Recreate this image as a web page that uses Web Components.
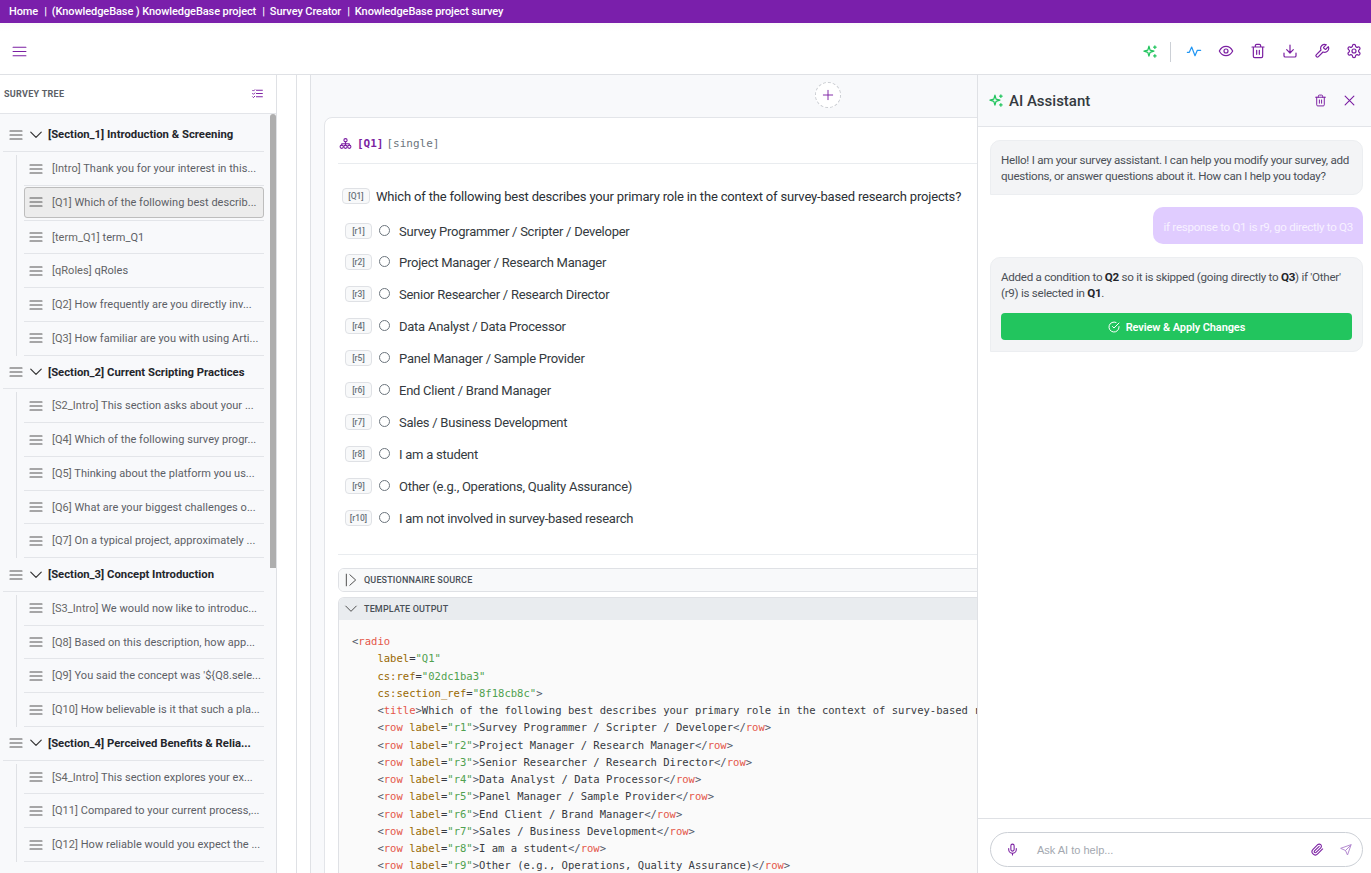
<!DOCTYPE html>
<html lang="en">
<head>
<meta charset="utf-8">
<title>Survey Creator</title>
<style>
  html, body { margin: 0; height: 100%; overflow: hidden; background: #fff; font-family: Roboto, "Liberation Sans", sans-serif; }
</style>
</head>
<body>
<survey-app></survey-app>

<script>
const ICONS = {
  sparkle: '<path d="M9.5 3.5 11.3 9.7 17.5 11.5 11.3 13.3 9.5 19.5 7.7 13.3 1.5 11.5 7.7 9.7Z"/><path d="M19 3v4M17 5h4M19 17v4M17 19h4"/>',
  activity: '<path d="M2 14h3l3.500-8 5 13 3.500-8h5"/>',
  eye: '<path d="M2 12s3.500-7 10-7 10 7 10 7-3.500 7-10 7-10-7-10-7z"/><circle cx="12" cy="12" r="3"/>',
  trash: '<path d="M3 6h18M5 6v14a2 2 0 0 0 2 2h10a2 2 0 0 0 2-2V6M8 6V4a2 2 0 0 1 2-2h4a2 2 0 0 1 2 2v2M10 11v6M14 11v6"/>',
  download: '<path d="M12 3v12M7 10l5 5 5-5M3 15v4a2 2 0 0 0 2 2h14a2 2 0 0 0 2-2v-4"/>',
  wrench: '<path d="M14.700 6.300a1 1 0 0 0 0 1.400l1.600 1.600a1 1 0 0 0 1.400 0l3.770-3.770a6 6 0 0 1-7.940 7.940l-6.910 6.910a2.120 2.120 0 0 1-3-3l6.910-6.910a6 6 0 0 1 7.940-7.940l-3.760 3.760z"/>',
  gear: '<path d="M12.220 2h-.44a2 2 0 0 0-2 2v.18a2 2 0 0 1-1 1.730l-.43.25a2 2 0 0 1-2 0l-.15-.08a2 2 0 0 0-2.730.73l-.22.38a2 2 0 0 0 .73 2.730l.15.1a2 2 0 0 1 1 1.720v.51a2 2 0 0 1-1 1.740l-.15.09a2 2 0 0 0-.73 2.730l.22.38a2 2 0 0 0 2.730.73l.15-.08a2 2 0 0 1 2 0l.43.25a2 2 0 0 1 1 1.730V20a2 2 0 0 0 2 2h.44a2 2 0 0 0 2-2v-.18a2 2 0 0 1 1-1.730l.43-.25a2 2 0 0 1 2 0l.15.08a2 2 0 0 0 2.730-.73l.22-.39a2 2 0 0 0-.73-2.730l-.15-.08a2 2 0 0 1-1-1.740v-.5a2 2 0 0 1 1-1.740l.15-.09a2 2 0 0 0 .73-2.730l-.22-.38a2 2 0 0 0-2.730-.73l-.15.08a2 2 0 0 1-2 0l-.43-.25a2 2 0 0 1-1-1.730V4a2 2 0 0 0-2-2z"/><circle cx="12" cy="12" r="3"/>',
  menu: '<path d="M3 6h18M3 12h18M3 18h18"/>',
  chevron: '<path d="M3 7l9 9 9-9"/>',
  expand: '<path d="M4 2v20M10 3l10 9-10 9"/>',
  close: '<path d="M5 5l14 14M19 5 5 19"/>',
  plus: '<path d="M12 4v16M4 12h16"/>',
  listcheck: '<path d="M10 6h11M10 12h11M10 18h11M3 6l1.500 1.500L7 5M3 12l1.500 1.500L7 11M3 18l1.500 1.500L7 17"/>',
  tree: '<circle cx="12" cy="6" r="3"/><circle cx="5" cy="18" r="3"/><circle cx="12" cy="18" r="3"/><circle cx="19" cy="18" r="3"/><path d="M12 9v6M5 15v-2.500h14V15"/>',
  check: '<path d="M22 11.080V12a10 10 0 1 1-5.930-9.140"/><path d="M22 4 12 14.010l-3-3"/>',
  clip: '<path d="m21.440 11.050-9.190 9.190a6 6 0 0 1-8.490-8.490l8.570-8.570A4 4 0 1 1 18 8.840l-8.590 8.570a2 2 0 0 1-2.830-2.830l8.490-8.480"/>',
  send: '<path d="M22 2 11 13M22 2l-7 20-4-9-9-4z"/>',
  mic: '<path d="M12 2a3 3 0 0 0-3 3v7a3 3 0 0 0 6 0V5a3 3 0 0 0-3-3z"/><path d="M19 10v2a7 7 0 0 1-14 0v-2M12 19v3"/>'
};

class UiIcon extends HTMLElement {
  connectedCallback() {
    const size = this.getAttribute('size') || 14;
    const stroke = this.getAttribute('stroke') || 2;
    const color = this.getAttribute('color') || 'currentColor';
    this.attachShadow({ mode: 'open' }).innerHTML = `
      <style>:host{display:inline-flex;flex:none;line-height:0}</style>
      <svg width="${size}" height="${size}" viewBox="0 0 24 24" fill="none" stroke="${color}"
        stroke-width="${stroke}" stroke-linecap="round" stroke-linejoin="round">${ICONS[this.getAttribute('name')]}</svg>`;
  }
}
customElements.define('ui-icon', UiIcon);

class CrumbBar extends HTMLElement {
  connectedCallback() {
    const crumbs = ['Home', '(KnowledgeBase ) KnowledgeBase project', 'Survey Creator', 'KnowledgeBase project survey'];
    this.attachShadow({ mode: 'open' }).innerHTML = `
      <style>
        :host{display:flex;align-items:center;height:23px;background:#7a1fab;color:#fff;padding-left:9px;
          font:500 11px/23px Roboto,sans-serif;letter-spacing:-.09px;white-space:nowrap}
        i{font-style:normal;margin:0 5px 0 6px}
      </style>
      ${crumbs.map(c => `<span>${c}</span>`).join('<i>|</i>')}`;
  }
}
customElements.define('crumb-bar', CrumbBar);

class TopToolbar extends HTMLElement {
  connectedCallback() {
    const right = [['activity', '#2196f3'], ['eye', '#7b1fa2'], ['trash', '#7b1fa2'], ['download', '#7b1fa2'], ['wrench', '#7b1fa2'], ['gear', '#7b1fa2']];
    this.attachShadow({ mode: 'open' }).innerHTML = `
      <style>
        :host{display:flex;align-items:center;height:52px;box-sizing:border-box;padding:5px 9px 0 11px;
          border-bottom:1px solid #dfe1e5;background:linear-gradient(#fafafa 0,#fff 8px)}
        .grow{flex:1}
        .sep{width:1px;height:20px;background:#ccd0d6;margin:1px 7px 0 12px}
        .ico{width:32px;display:flex;justify-content:center}
        .ico:last-child{width:16px;margin-left:8px}
      </style>
      <ui-icon name="menu" size="17" stroke="1.700" color="#7b1fa2"></ui-icon>
      <div class="grow"></div>
      <ui-icon name="sparkle" size="15" color="#22c55e"></ui-icon>
      <div class="sep"></div>
      ${right.map(r => `<div class="ico"><ui-icon name="${r[0]}" size="16" stroke="1.800" color="${r[1]}"></ui-icon></div>`).join('')}`;
  }
}
customElements.define('top-toolbar', TopToolbar);

class TreeRow extends HTMLElement {
  connectedCallback() {
    const section = this.hasAttribute('section');
    const active = this.hasAttribute('active');
    const tag = this.getAttribute('tag');
    const text = this.getAttribute('text');
    this.attachShadow({ mode: 'open' }).innerHTML = `
      <style>
        :host{display:block;height:33.75px;box-sizing:border-box;border-bottom:1px solid #e3e5e9;margin-left:${section ? 3 : 24}px;margin-right:12px}
        .row{display:flex;align-items:center;height:100%;box-sizing:border-box;white-space:nowrap}
        .section{padding-left:5px;font:700 11.3px Roboto,sans-serif;color:#24262b}
        .item{padding-left:4px;font:400 11px Roboto,sans-serif;letter-spacing:.04px;color:#5c6066}
        .bars{margin-right:8px;display:flex}
        .section .bars{margin-right:4.500px}
        .chev{margin-right:5.500px;display:flex}
        .active{background:#ececec;border:1px solid #bdbdbd;border-radius:3px;height:31px;margin-top:1px;padding-left:3px}
        .item .tag{color:#666}
      </style>
      <div class="row ${section ? 'section' : 'item'} ${active ? 'active' : ''}">
        <span class="bars"><ui-icon name="menu" size="16" stroke="1.700" color="#555"></ui-icon></span>
        ${section ? '<span class="chev"><ui-icon name="chevron" size="14" stroke="2" color="#333"></ui-icon></span>' : ''}
        <span><span class="tag">${tag}</span> ${text}</span>
      </div>`;
  }
}
customElements.define('tree-row', TreeRow);

class TreeSection extends HTMLElement {
  connectedCallback() {
    this.attachShadow({ mode: 'open' }).innerHTML = `
      <style>
        :host{display:block}
        .kids{position:relative}
        .line{position:absolute;left:16px;top:3px;bottom:0;width:1px;background:#dfe1e5}
      </style>
      <slot name="head"></slot>
      <div class="kids"><div class="line"></div><slot></slot></div>`;
  }
}
customElements.define('tree-section', TreeSection);

class SurveyTree extends HTMLElement {
  connectedCallback() {
    const data = [
      ['[Section_1]', 'Introduction & Screening', [
        ['[Intro]', 'Thank you for your interest in this...'],
        ['[Q1]', 'Which of the following best describ...', 1],
        ['[term_Q1]', 'term_Q1'],
        ['[qRoles]', 'qRoles'],
        ['[Q2]', 'How frequently are you directly inv...'],
        ['[Q3]', 'How familiar are you with using Arti...']]],
      ['[Section_2]', 'Current Scripting Practices', [
        ['[S2_Intro]', 'This section asks about your ...'],
        ['[Q4]', 'Which of the following survey progr...'],
        ['[Q5]', 'Thinking about the platform you us...'],
        ['[Q6]', 'What are your biggest challenges o...'],
        ['[Q7]', 'On a typical project, approximately ...']]],
      ['[Section_3]', 'Concept Introduction', [
        ['[S3_Intro]', 'We would now like to introduc...'],
        ['[Q8]', 'Based on this description, how app...'],
        ['[Q9]', 'You said the concept was \'${Q8.sele...'],
        ['[Q10]', 'How believable is it that such a pla...']]],
      ['[Section_4]', 'Perceived Benefits & Relia...', [
        ['[S4_Intro]', 'This section explores your ex...'],
        ['[Q11]', 'Compared to your current process,...'],
        ['[Q12]', 'How reliable would you expect the ...']]]
    ];
    const esc = s => s.replace(/&/g, '&amp;').replace(/"/g, '&quot;');
    this.attachShadow({ mode: 'open' }).innerHTML = `
      <style>
        :host{display:flex;flex-direction:column;flex:none;width:277px;box-sizing:border-box;border-right:1px solid #dfe1e5;height:100%;overflow:hidden;background:#fff}
        .head{display:flex;align-items:center;justify-content:space-between;height:39px;flex:none;box-sizing:border-box;
          padding:0 12px 0 4px;border-bottom:1px solid #e3e5e9;
          font:700 9px Roboto,sans-serif;color:#5c6066;letter-spacing:.28px}
        .head ui-icon{margin-top:-2px}
        .body{position:relative;flex:1;overflow:hidden;background:#f8f9fb;padding-top:4.400px}
        .thumb{position:absolute;right:0;top:0;width:6px;height:454px;background:#aeaeae;border-radius:3px 3px 0 0}
      </style>
      <div class="head"><span>SURVEY TREE</span><ui-icon name="listcheck" size="13" color="#7b1fa2" stroke="1.800"></ui-icon></div>
      <div class="body">
        ${data.map(s => `<tree-section>
          <tree-row slot="head" section tag="${s[0]}" text="${esc(s[1])}"></tree-row>
          ${s[2].map(i => `<tree-row tag="${i[0]}" text="${esc(i[1])}" ${i[2] ? 'active' : ''}></tree-row>`).join('')}
        </tree-section>`).join('')}
        <div class="thumb"></div>
      </div>`;
  }
}
customElements.define('survey-tree', SurveyTree);

class ChoiceRow extends HTMLElement {
  connectedCallback() {
    this.attachShadow({ mode: 'open' }).innerHTML = `
      <style>
        :host{display:flex;align-items:center;height:32px;box-sizing:border-box;padding-left:7px;font:400 13px Roboto,sans-serif;letter-spacing:-.25px;color:#343a40}
        :host([first]){padding-top:2px}
        .tag{display:inline-flex;align-items:center;justify-content:center;box-sizing:border-box;width:27px;height:16px;
          border:1px solid #dfe1e5;border-radius:4px;background:#f8f9fa;font:500 8.500px Roboto,sans-serif;letter-spacing:0;color:#6c757d}
        .radio{box-sizing:border-box;width:11px;height:11px;border:1px solid #6c757d;border-radius:50%;margin:-1px 9px 0 7px;flex:none}
      </style>
      <span class="tag">${this.getAttribute('tag')}</span><span class="radio"></span><slot></slot>`;
  }
}
customElements.define('choice-row', ChoiceRow);

class UiDisclosure extends HTMLElement {
  connectedCallback() {
    const open = this.hasAttribute('open');
    this.attachShadow({ mode: 'open' }).innerHTML = `
      <style>
        :host{display:block;margin:0 0 5px 13px;border:1px solid #dfe1e5;border-bottom:${open ? 0 : '1px solid #dfe1e5'};border-radius:6px 6px ${open ? '0 0' : '6px 6px'};overflow:hidden}
        .bar{display:flex;align-items:center;gap:6px;height:22px;padding-left:5px;background:${open ? '#e9ecef' : '#f8f9fa'};
          font:500 9px Roboto,sans-serif;color:#495057;letter-spacing:.15px}
        .body{background:#fafafa}
      </style>
      <div class="bar"><ui-icon name="${open ? 'chevron' : 'expand'}" size="14" color="#444" stroke="1.600"></ui-icon><span>${this.getAttribute('label')}</span></div>
      ${open ? '<div class="body"><slot></slot></div>' : ''}`;
  }
}
customElements.define('ui-disclosure', UiDisclosure);

class CodeView extends HTMLElement {
  connectedCallback() {
    const row = (l, s) => `<u>&lt;</u><b>row</b> <em>label</em>=<s>"${l}"</s><u>&gt;</u>${s}<u>&lt;/</u><b>row</b><u>&gt;</u>`;
    const lines = [
      [0, '<u>&lt;</u><b>radio</b>'],
      [1, '<em>label</em>=<s>"Q1"</s>'],
      [1, '<em>cs:ref</em>=<s>"02dc1ba3"</s>'],
      [1, '<em>cs:section_ref</em>=<s>"8f18cb8c"</s><u>&gt;</u>'],
      [1, '<u>&lt;</u><b>title</b><u>&gt;</u>Which of the following best describes your primary role in the context of survey-based research projects?'],
      [1, row('r1', 'Survey Programmer / Scripter / Developer')],
      [1, row('r2', 'Project Manager / Research Manager')],
      [1, row('r3', 'Senior Researcher / Research Director')],
      [1, row('r4', 'Data Analyst / Data Processor')],
      [1, row('r5', 'Panel Manager / Sample Provider')],
      [1, row('r6', 'End Client / Brand Manager')],
      [1, row('r7', 'Sales / Business Development')],
      [1, row('r8', 'I am a student')],
      [1, row('r9', 'Other (e.g., Operations, Quality Assurance)')]
    ];
    this.attachShadow({ mode: 'open' }).innerHTML = `
      <style>
        :host{display:block;padding:13px 13px 0;height:260px;overflow:hidden}
        div{height:17.250px;white-space:pre;font:400 10.560px/17.250px "DejaVu Sans Mono",monospace;color:#383a42}
        .in{padding-left:25.400px}
        b{font-weight:400;color:#e45649}
        em{font-style:normal;color:#986801}
        s{text-decoration:none;color:#50a14f}
        u{text-decoration:none;color:#4e5666}
      </style>
      ${lines.map(l => `<div class="${l[0] ? 'in' : ''}">${l[1]}</div>`).join('')}`;
  }
}
customElements.define('code-view', CodeView);

class QuestionCard extends HTMLElement {
  connectedCallback() {
    const choices = [
      ['[r1]', 'Survey Programmer / Scripter / Developer'],
      ['[r2]', 'Project Manager / Research Manager'],
      ['[r3]', 'Senior Researcher / Research Director'],
      ['[r4]', 'Data Analyst / Data Processor'],
      ['[r5]', 'Panel Manager / Sample Provider'],
      ['[r6]', 'End Client / Brand Manager'],
      ['[r7]', 'Sales / Business Development'],
      ['[r8]', 'I am a student'],
      ['[r9]', 'Other (e.g., Operations, Quality Assurance)'],
      ['[r10]', 'I am not involved in survey-based research']
    ];
    this.attachShadow({ mode: 'open' }).innerHTML = `
      <style>
        :host{display:block;flex:none;width:1000px;margin-left:13px;box-sizing:border-box;background:#fff;
          border:1px solid #e3e5e9;border-radius:8px 0 0 0}
        .head{display:flex;align-items:center;gap:3px;height:46px;margin-left:13px;padding:5px 0 0 1px;box-sizing:border-box;border-bottom:1px solid #e9ecef;
          font:400 11px "DejaVu Sans Mono",monospace;color:#6c757d}
        .head b{color:#7b1fa2;font-weight:700;margin-left:2px}
        .q{display:flex;align-items:center;gap:6px;margin:24px 0 0 17px;font:400 13px Roboto,sans-serif;letter-spacing:-.17px;color:#2b3035;height:16px;white-space:nowrap}
        .qtag{display:inline-flex;align-items:center;justify-content:center;box-sizing:border-box;width:28px;height:16px;
          border:1px solid #dfe1e5;border-radius:4px;background:#f8f9fa;font:500 8.500px Roboto,sans-serif;letter-spacing:0;color:#6c757d}
        .choices{margin:10px 0 0 13px;padding-bottom:20px;border-bottom:1px solid #e9ecef}
        .spacer{height:13px}
      </style>
      <div class="head"><ui-icon name="tree" size="13" color="#7b1fa2" stroke="2"></ui-icon><b>[Q1]</b> <span>[single]</span></div>
      <div class="q"><span class="qtag">[Q1]</span><span>Which of the following best describes your primary role in the context of survey-based research projects?</span></div>
      <div class="choices">${choices.map((c, i) => `<choice-row ${i ? '' : 'first'} tag="${c[0]}">${c[1]}</choice-row>`).join('')}</div>
      <div class="spacer"></div>
      <ui-disclosure label="QUESTIONNAIRE SOURCE"></ui-disclosure>
      <ui-disclosure open label="TEMPLATE OUTPUT"><code-view></code-view></ui-disclosure>`;
  }
}
customElements.define('question-card', QuestionCard);

class ChatBubble extends HTMLElement {
  connectedCallback() {
    const user = this.hasAttribute('user');
    this.attachShadow({ mode: 'open' }).innerHTML = `
      <style>
        :host{display:block;box-sizing:border-box;font:400 11.600px/16px Roboto,sans-serif;letter-spacing:-.27px;border-radius:10px;
          ${user ? 'align-self:flex-end;background:#e0ccff;color:#f7f1ff;border-bottom-right-radius:0;padding:12px 10px 9px;letter-spacing:-.3px;width:210px;text-align:right;height:37px;'
                 : 'background:#f3f4f6;color:#4b5057;border:1px solid #eceef1;border-bottom-left-radius:0;padding:11px 10px 10px;'}}
        ::slotted(b){color:#24262b}
      </style>
      <slot></slot>`;
  }
}
customElements.define('chat-bubble', ChatBubble);

class ApplyButton extends HTMLElement {
  connectedCallback() {
    this.attachShadow({ mode: 'open' }).innerHTML = `
      <style>
        :host{display:flex;align-items:center;justify-content:center;gap:6px;height:27px;box-sizing:border-box;padding-top:1px;margin:12px 0 1px;border-radius:4px;
          background:#22c55e;color:#fff;font:600 11px Roboto,sans-serif;letter-spacing:-.1px}
      </style>
      <ui-icon name="check" size="12" color="#fff" stroke="2"></ui-icon><slot></slot>`;
  }
}
customElements.define('apply-button', ApplyButton);

class AiPanel extends HTMLElement {
  connectedCallback() {
    this.attachShadow({ mode: 'open' }).innerHTML = `
      <style>
        :host{display:flex;flex-direction:column;flex:none;width:394px;height:100%;box-sizing:border-box;border-left:1px solid #dfe1e5;background:#fff}
        .head{display:flex;align-items:center;height:52px;flex:none;box-sizing:border-box;padding:0 14px 0 11px;background:#f8f9fb;border-bottom:1px solid #e3e5e9}
        .title{flex:1;margin-left:5px;font:500 15px Roboto,sans-serif;color:#343a40}
        .gap{width:15px}
        .log{flex:1;display:flex;flex-direction:column;gap:12px;padding:13px 8px 0 12px;overflow:hidden}
        .log ::slotted(chat-bubble:last-child){margin-top:1px}
        .foot{flex:none;height:55px;box-sizing:border-box;border-top:1px solid #dfe1e5;padding:13px 8px 0 12px}
        .input{display:flex;align-items:center;height:35px;box-sizing:border-box;border:1px solid #ccd0d6;border-radius:18px;padding:0 10px 0 15px;
          font:400 11px "Liberation Sans",Arial,sans-serif;color:#a3a8b0}
        .ph{flex:1;margin-left:18px}
      </style>
      <div class="head">
        <ui-icon name="sparkle" size="15" color="#22c55e"></ui-icon>
        <div class="title">AI Assistant</div>
        <ui-icon name="trash" size="13" color="#7b1fa2" stroke="1.800"></ui-icon>
        <div class="gap"></div>
        <ui-icon name="close" size="15" color="#7b1fa2" stroke="1.800"></ui-icon>
      </div>
      <div class="log"><slot></slot></div>
      <div class="foot">
        <div class="input">
          <ui-icon name="mic" size="13" color="#7b1fa2" stroke="2"></ui-icon>
          <span class="ph">Ask AI to help...</span>
          <ui-icon name="clip" size="13" color="#7b1fa2" stroke="2"></ui-icon>
          <ui-icon name="send" size="12" color="#b48ad0" stroke="2" style="margin-left:16px"></ui-icon>
        </div>
      </div>`;
  }
}
customElements.define('ai-panel', AiPanel);

class AddButton extends HTMLElement {
  connectedCallback() {
    this.attachShadow({ mode: 'open' }).innerHTML = `
      <style>
        :host{display:flex;align-items:center;justify-content:center;width:26px;height:26px;box-sizing:border-box;border:1px dashed #c9ccd1;border-radius:50%;background:#fff}
      </style>
      <ui-icon name="plus" size="14" color="#7b1fa2" stroke="1.600"></ui-icon>`;
  }
}
customElements.define('add-button', AddButton);

class SurveyApp extends HTMLElement {
  connectedCallback() {
    this.attachShadow({ mode: 'open' }).innerHTML = `
      <style>
        :host{display:flex;flex-direction:column;height:100vh;overflow:hidden}
        .work{flex:1;display:flex;min-height:0}
        .rail{flex:none;width:19px;background:#fff;border-right:1px solid #dfe1e5}
        .rail2{flex:none;width:13px;background:#fff;border-right:1px solid #dfe1e5}
        .main{flex:1;min-width:0;background:#f8f9fb;overflow:hidden;display:flex;flex-direction:column}
        .add{flex:none;height:40px;margin-bottom:2px;display:flex;align-items:center;justify-content:center;width:1034px}
      </style>
      <crumb-bar></crumb-bar>
      <top-toolbar></top-toolbar>
      <div class="work">
        <survey-tree></survey-tree>
        <div class="rail"></div>
        <div class="rail2"></div>
        <div class="main">
          <div class="add"><add-button></add-button></div>
          <question-card></question-card>
        </div>
        <ai-panel>
          <chat-bubble>Hello! I am your survey assistant. I can help you modify your survey, add questions, or answer questions about it. How can I help you today?</chat-bubble>
          <chat-bubble user>if response to Q1 is r9, go directly to Q3</chat-bubble>
          <chat-bubble>Added a condition to <b>Q2</b> so it is skipped (going directly to <b>Q3</b>) if 'Other'<br>(r9) is selected in <b>Q1</b>.<apply-button>Review &amp; Apply Changes</apply-button></chat-bubble>
        </ai-panel>
      </div>`;
  }
}
customElements.define('survey-app', SurveyApp);
</script>
</body>
</html>
